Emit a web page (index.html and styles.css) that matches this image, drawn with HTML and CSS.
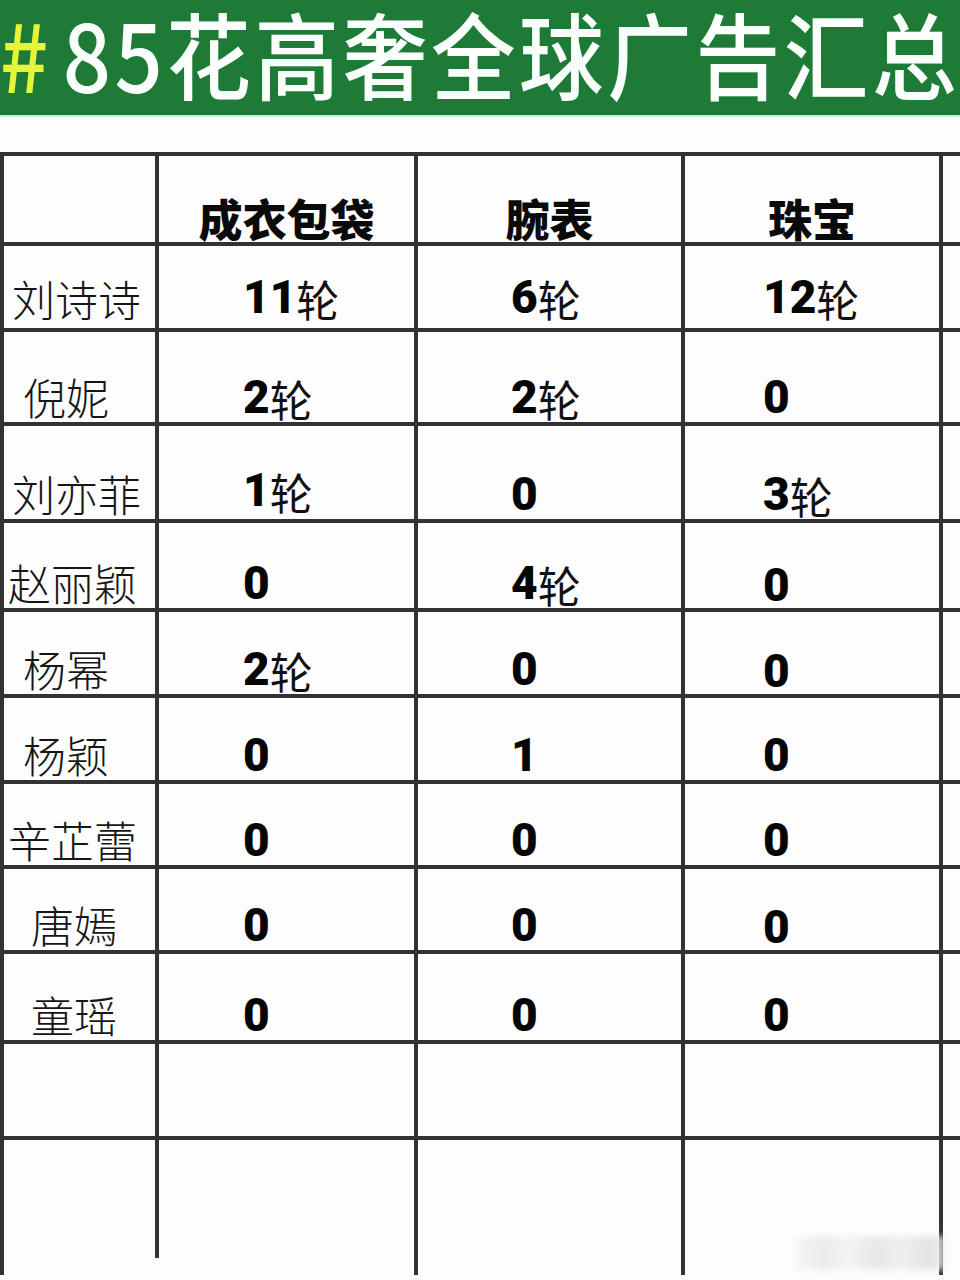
FILE: index.html
```html
<!DOCTYPE html>
<html lang="zh-CN">
<head>
<meta charset="utf-8">
<title>#85花高奢全球广告汇总</title>
<link rel="stylesheet" href="styles.css">
</head>
<body>
<header class="banner">
  <h1 class="title"><span class="hash">#</span>85花高奢全球广告汇总</h1>
</header>

<div class="sheet">
  <div class="cell head"></div>
  <div class="cell head label">成衣包袋</div>
  <div class="cell head label">腕表</div>
  <div class="cell head label">珠宝</div>
  <div class="cell head"></div>

  <div class="cell name r-high">刘诗诗</div>
  <div class="cell val c1 r-high"><span class="n">11</span>轮</div>
  <div class="cell val c2 r-high"><span class="n">6</span>轮</div>
  <div class="cell val c3 r-high"><span class="n">12</span>轮</div>
  <div class="cell"></div>

  <div class="cell name name--mid">倪妮</div>
  <div class="cell val c1"><span class="n">2</span>轮</div>
  <div class="cell val c2"><span class="n">2</span>轮</div>
  <div class="cell val c3"><span class="n">0</span></div>
  <div class="cell"></div>

  <div class="cell name">刘亦菲</div>
  <div class="cell val c1 r-mid"><span class="n">1</span>轮</div>
  <div class="cell val c2"><span class="n">0</span></div>
  <div class="cell val c3"><span class="n">3</span>轮</div>
  <div class="cell"></div>

  <div class="cell name name--tight">赵丽颖</div>
  <div class="cell val c1"><span class="n">0</span></div>
  <div class="cell val c2"><span class="n">4</span>轮</div>
  <div class="cell val c3 r-low"><span class="n">0</span></div>
  <div class="cell"></div>

  <div class="cell name name--mid">杨幂</div>
  <div class="cell val c1"><span class="n">2</span>轮</div>
  <div class="cell val c2"><span class="n">0</span></div>
  <div class="cell val c3 r-low"><span class="n">0</span></div>
  <div class="cell"></div>

  <div class="cell name name--mid">杨颖</div>
  <div class="cell val c1"><span class="n">0</span></div>
  <div class="cell val c2"><span class="n">1</span></div>
  <div class="cell val c3"><span class="n">0</span></div>
  <div class="cell"></div>

  <div class="cell name name--tight">辛芷蕾</div>
  <div class="cell val c1"><span class="n">0</span></div>
  <div class="cell val c2"><span class="n">0</span></div>
  <div class="cell val c3"><span class="n">0</span></div>
  <div class="cell"></div>

  <div class="cell name name--wide">唐嫣</div>
  <div class="cell val c1"><span class="n">0</span></div>
  <div class="cell val c2"><span class="n">0</span></div>
  <div class="cell val c3 r-low"><span class="n">0</span></div>
  <div class="cell"></div>

  <div class="cell name name--wide">童瑶</div>
  <div class="cell val c1"><span class="n">0</span></div>
  <div class="cell val c2"><span class="n">0</span></div>
  <div class="cell val c3"><span class="n">0</span></div>
  <div class="cell"></div>

  <div class="cell"></div>
  <div class="cell"></div>
  <div class="cell"></div>
  <div class="cell"></div>
  <div class="cell"></div>

  <div class="cell last short"></div>
  <div class="cell last"></div>
  <div class="cell last"></div>
  <div class="cell last"></div>
  <div class="cell last"></div>
</div>

<div class="watermark" aria-hidden="true"></div>
</body>
</html>
```

FILE: styles.css
```css
html, body {
  margin: 0;
  padding: 0;
}

body {
  width: 960px;
  height: 1280px;
  overflow: hidden;
  position: relative;
  background: #fdfdfd;
  font-family: "Noto Sans CJK SC", "Noto Sans", sans-serif;
  color: #111;
}

.banner {
  height: 115px;
  background: #1e7b37;
  border-bottom: 2px solid #d6ead8;
  overflow: hidden;
}

.title {
  margin: 0;
  height: 115px;
  line-height: 104px;
  font-size: 94px;
  font-weight: 500;
  color: #fbfffb;
  letter-spacing: 4px;
  white-space: nowrap;
  transform: scaleX(0.9);
  transform-origin: left center;
}

.hash {
  color: #e6f53a;
  margin-right: 12px;
}

.sheet {
  margin-top: 35px;
  display: grid;
  grid-template-columns: 155px 259px 267px 258px 60px;
  grid-template-rows: 90px 86px 94px 97px 89px 86px 86px 85px 85px 90px 96px 135px;
  border-top: 4px solid #333;
  border-left: 4px solid #333;
  width: 1100px;
}

.cell {
  box-sizing: border-box;
  border-right: 4px solid #333;
  border-bottom: 4px solid #333;
  display: flex;
  align-items: flex-end;
  line-height: 1;
  font-size: 43px;
  min-width: 0;
}

.cell.last {
  border-bottom: none;
}

.cell.short {
  align-self: start;
  height: 118px;
}

.label {
  justify-content: center;
  font-weight: 900;
  font-size: 44px;
  color: #0a0a0a;
  padding-bottom: 2px;
}

.name {
  font-weight: 300;
  padding-left: 8px;
  padding-bottom: 4px;
  color: #161616;
}

.name--tight { padding-left: 4px; }
.name--mid { padding-left: 19px; }
.name--wide { padding-left: 27px; }

.val {
  font-weight: 400;
  padding-bottom: 2px;
  color: #111;
}

.c1 { padding-left: 84px; }
.c2 { padding-left: 93px; }
.c3 { padding-left: 78px; }

.r-high { padding-bottom: 8px; }
.r-mid { padding-bottom: 6px; }
.r-low { padding-bottom: 0; }

.n {
  font-family: Roboto, "Liberation Sans", sans-serif;
  font-weight: 900;
  font-size: 46px;
  color: #050505;
}

.watermark {
  position: absolute;
  left: 795px;
  top: 1236px;
  width: 150px;
  height: 34px;
  background: linear-gradient(90deg, #f4f4f4 0%, #e6e6e6 20%, #f2f2f2 35%, #e2e2e2 55%, #ececec 70%, #dedede 90%, #f0f0f0 100%);
  filter: blur(3px);
  opacity: 0.8;
}
```
